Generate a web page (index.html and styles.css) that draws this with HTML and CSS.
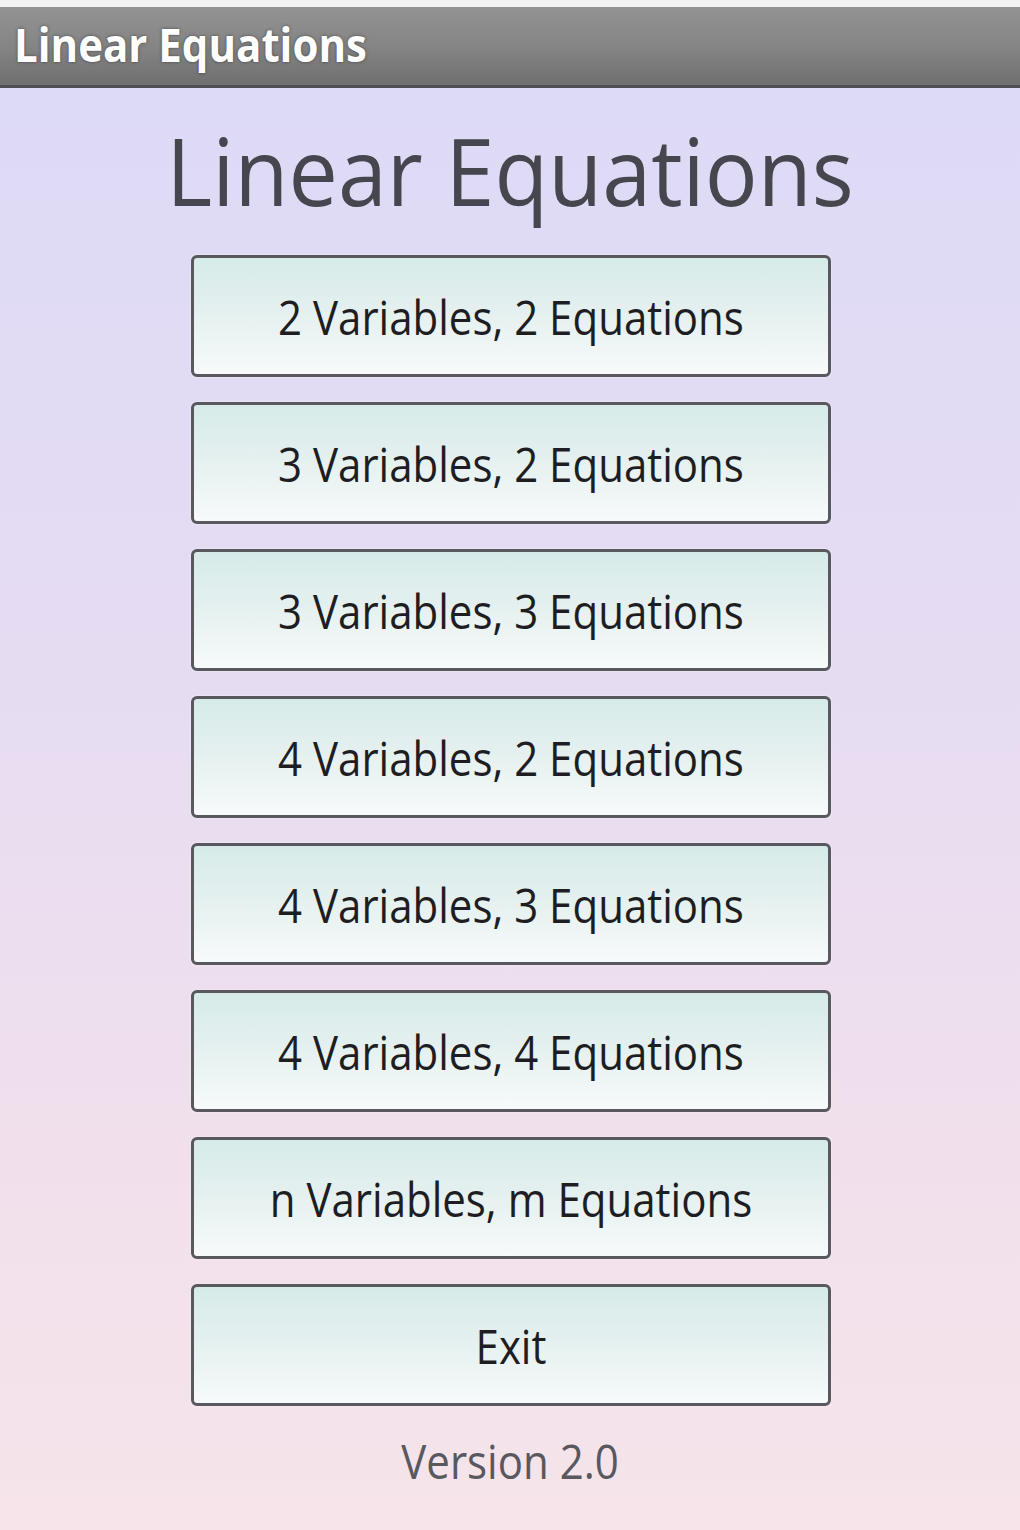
FILE: index.html
```html
<!DOCTYPE html>
<html>
<head>
<meta charset="utf-8">
<link rel="stylesheet" href="styles.css">
</head>
<body>
<div class="topstrip"></div>
<div class="titlebar"><span class="titletext">Linear Equations</span></div>
<main class="content">
  <h1 class="heading"><span class="tall">Linear Equations</span></h1>
  <div class="buttons">
    <div class="btn"><span class="tall">2 Variables, 2 Equations</span></div>
    <div class="btn"><span class="tall">3 Variables, 2 Equations</span></div>
    <div class="btn"><span class="tall">3 Variables, 3 Equations</span></div>
    <div class="btn"><span class="tall">4 Variables, 2 Equations</span></div>
    <div class="btn"><span class="tall">4 Variables, 3 Equations</span></div>
    <div class="btn"><span class="tall">4 Variables, 4 Equations</span></div>
    <div class="btn"><span class="tall">n Variables, m Equations</span></div>
    <div class="btn"><span class="tall">Exit</span></div>
  </div>
  <div class="version"><span class="tall">Version 2.0</span></div>
</main>
</body>
</html>
```
FILE: styles.css
```css
html, body {
  margin: 0;
  padding: 0;
}
body {
  width: 1020px;
  height: 1530px;
  overflow: hidden;
  font-family: "Open Sans", "Noto Sans", "DejaVu Sans", sans-serif;
  background: linear-gradient(to bottom, #dcdaf7 0%, #e6dcf2 45%, #f1e0ec 75%, #f6e4ea 100%);
}
.topstrip {
  height: 7px;
  background: #f2f2f2;
}
.titlebar {
  height: 78px;
  background: linear-gradient(to bottom, #939393 0%, #858585 50%, #6f6f6f 100%);
  border-bottom: 3px solid #4f4f55;
  padding-left: 14px;
  display: flex;
  align-items: flex-start;
}
.titletext {
  display: block;
  margin-top: 18px;
  font-size: 42px;
  line-height: 42px;
  font-weight: 700;
  color: #ffffff;
  text-shadow: 0 0 3px rgba(40,40,40,0.7);
  transform: scaleY(1.12);
  transform-origin: left 80%;
}
.tall {
  display: inline-block;
  transform: scaleY(1.14);
}
.content {
  display: flex;
  flex-direction: column;
  align-items: center;
}
.heading {
  margin: 39px 0 0 0;
  font-size: 88px;
  line-height: 88px;
  font-weight: 400;
  color: #46464f;
}
.heading .tall {
  transform: scaleY(1.07);
  transform-origin: center 80%;
}
.buttons {
  margin-top: 40px;
  display: flex;
  flex-direction: column;
  gap: 25px;
  width: 640px;
  margin-left: 2px;
}
.btn {
  box-sizing: border-box;
  height: 122px;
  border: 3px solid #58585e;
  border-radius: 6px;
  background: linear-gradient(to bottom, #d6ebe9 0%, #e4f0ef 45%, #f7fafa 100%);
  display: flex;
  align-items: center;
  justify-content: center;
  font-size: 42px;
  color: #1e1e22;
  box-shadow: 0 0 2px rgba(255,255,255,0.8);
}
.version {
  margin-top: 34px;
  font-size: 42px;
  line-height: 42px;
  color: #58585e;
}
```
